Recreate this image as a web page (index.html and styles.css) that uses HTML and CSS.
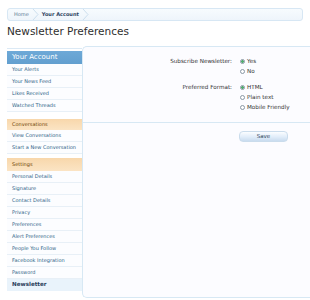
FILE: index.html
```html
<!DOCTYPE html>
<html>
<head>
<meta charset="utf-8">
<link rel="stylesheet" href="styles.css">
</head>
<body>
<div class="page">
  <nav class="crumbs">
    <span class="crumb">Home</span>
    <svg class="chev" width="8" height="11" viewBox="0 0 8 11"><polyline points="1,0 6,5.5 1,11" fill="none" stroke="#c3d8ea" stroke-width="0.8"/></svg>
    <span class="crumb cur">Your Account</span>
    <svg class="chev" width="8" height="11" viewBox="0 0 8 11"><polyline points="1,0 6,5.5 1,11" fill="none" stroke="#c3d8ea" stroke-width="0.8"/></svg>
  </nav>
  <h1 class="title">Newsletter Preferences</h1>
  <div class="main">
    <aside class="side">
      <div class="sec sec-account">
        <h3 class="sh sh-blue">Your Account</h3>
        <ul class="items">
          <li>Your Alerts</li>
          <li>Your News Feed</li>
          <li>Likes Received</li>
          <li>Watched Threads</li>
        </ul>
      </div>
      <div class="sec sec-conv">
        <h3 class="sh sh-orange sh-conv">Conversations</h3>
        <ul class="items">
          <li>View Conversations</li>
          <li>Start a New Conversation</li>
        </ul>
      </div>
      <div class="sec">
        <h3 class="sh sh-orange">Settings</h3>
        <ul class="items">
          <li>Personal Details</li>
          <li>Signature</li>
          <li>Contact Details</li>
          <li>Privacy</li>
          <li>Preferences</li>
          <li>Alert Preferences</li>
          <li>People You Follow</li>
          <li>Facebook Integration</li>
          <li>Password</li>
          <li class="sel">Newsletter</li>
        </ul>
      </div>
    </aside>
    <section class="content">
      <form class="form">
        <div class="row">
          <div class="lbl">Subscribe Newsletter:</div>
          <ul class="opts">
            <li><span class="radio on"></span>Yes</li>
            <li><span class="radio"></span>No</li>
          </ul>
        </div>
        <div class="row row2">
          <div class="lbl">Preferred Format:</div>
          <ul class="opts">
            <li><span class="radio on"></span>HTML</li>
            <li><span class="radio"></span>Plain text</li>
            <li><span class="radio"></span>Mobile Friendly</li>
          </ul>
        </div>
        <div class="sep"></div>
        <div class="row">
          <div class="lbl"></div>
          <div><button type="button" class="btn">Save</button></div>
        </div>
      </form>
    </section>
  </div>
</div>
</body>
</html>
```
FILE: styles.css
```css
html, body {
  margin: 0;
  padding: 0;
}
body {
  width: 310px;
  height: 300px;
  overflow: hidden;
  background: #ffffff;
  font-family: "DejaVu Sans", sans-serif;
  color: #333333;
}
.page {
  padding: 8px 7px 0 7px;
}
.crumbs {
  display: flex;
  align-items: center;
  box-sizing: border-box;
  height: 13px;
  border: 1px solid #d7e7f4;
  border-radius: 3px;
  background: linear-gradient(#f7fbfe, #eef5fb);
  padding-left: 6px;
}
.crumb {
  font-size: 5px;
  line-height: 11px;
  color: #5b7a93;
}
.crumb.cur {
  font-weight: bold;
  color: #2b3f5c;
}
.chev {
  display: block;
  margin: 0 2px 0 3px;
}
.title {
  margin: 3px 0 0 0;
  height: 14px;
  font-size: 10.5px;
  line-height: 14px;
  font-weight: normal;
  color: #2e2e2e;
}
.main {
  display: flex;
  margin-top: 8px;
  margin-right: -7px;
}
.side {
  width: 75px;
  flex: none;
  margin-top: 2px;
  border-top: 1px solid #dbe9f5;
  padding-top: 2px;
}
.sec-account {
  margin-bottom: 7px;
}
.sec-conv {
  margin-bottom: 4px;
}
.sh {
  margin: 0;
  height: 12px;
  line-height: 12px;
  padding-left: 5px;
  font-weight: normal;
  font-size: 5px;
}
.sh-blue {
  height: 13px;
  line-height: 13px;
  font-size: 7px;
  color: #ffffff;
  background: linear-gradient(#6ea9d7, #629fcf);
}
.sh-orange {
  height: 13px;
  line-height: 13px;
  color: #6d3f03;
  background: linear-gradient(#f8d7ab, #fbe4c4);
}
.sh-conv {
  height: 11px;
  line-height: 11px;
}
.items {
  list-style: none;
  margin: 0;
  padding: 0;
  background: #fcfdff;
}
.items li {
  box-sizing: border-box;
  height: 12px;
  line-height: 11px;
  padding-left: 5px;
  font-size: 5px;
  color: #2d5f86;
  border-bottom: 1px solid #e8f0f7;
}
.items li.sel {
  font-size: 5.6px;
  font-weight: bold;
  color: #2b3f5c;
  background: #e9f3fb;
  border-bottom: none;
}
.content {
  flex: 1;
  box-sizing: border-box;
  height: 252px;
  border: 1px solid #d7e8f4;
  border-right: none;
  border-radius: 5px 0 0 5px;
  background: #fcfcff;
}
.form {
  margin: 0;
  padding-top: 9px;
}
.row {
  display: grid;
  grid-template-columns: 149px 1fr;
  column-gap: 8px;
}
.row2 {
  margin-top: 6px;
}
.lbl {
  text-align: right;
  font-size: 5.65px;
  line-height: 10px;
  color: #333333;
}
.opts {
  list-style: none;
  margin: 0;
  padding: 0;
}
.opts li {
  display: flex;
  align-items: center;
  height: 10px;
  font-size: 5.65px;
  color: #333333;
}
.radio {
  display: inline-block;
  box-sizing: border-box;
  width: 5px;
  height: 5px;
  margin-right: 2px;
  border: 0.7px solid #8a98a5;
  border-radius: 50%;
  background: #ffffff;
}
.radio.on {
  background: radial-gradient(circle, #4fae6c 0, #4fae6c 1.2px, #ffffff 1.6px);
}
.sep {
  margin-top: 10px;
  border-top: 1px solid #d7e8f4;
}
.row:last-child {
  margin-top: 8px;
}
.btn {
  display: block;
  margin-left: -1px;
  box-sizing: border-box;
  width: 49px;
  height: 11px;
  padding: 0;
  border: 1px solid #cadcec;
  border-radius: 4px;
  background: linear-gradient(#fbfdff, #e3eefa 50%, #c9dcef);
  font-family: "DejaVu Sans", sans-serif;
  font-size: 5.5px;
  line-height: 9px;
  color: #2f4458;
}
```
